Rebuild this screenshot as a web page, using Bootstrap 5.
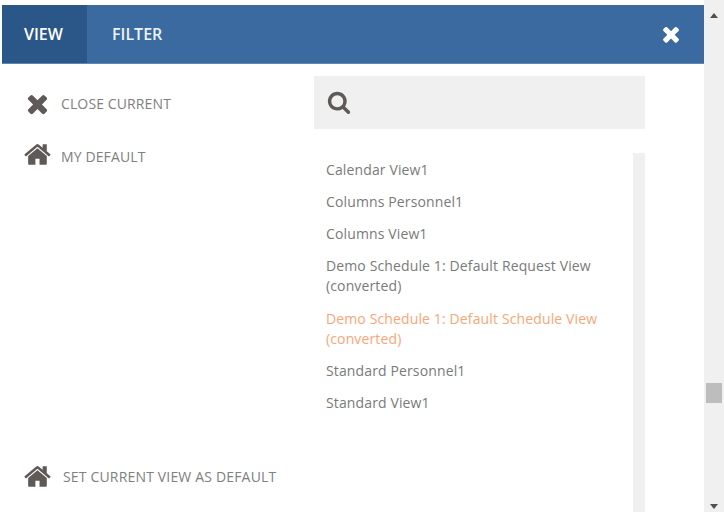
<!DOCTYPE html>
<html lang="en">
<head>
<meta charset="utf-8">
<title>View panel</title>
<link rel="stylesheet" href="https://cdn.jsdelivr.net/npm/bootstrap@5.3.0/dist/css/bootstrap.min.css">
<style>
html,body{height:512px;overflow:hidden;background:#fff}
body{font-family:"Open Sans","Noto Sans",sans-serif;font-size:14px;color:#7a7a7a}
.shell{height:512px}
.pane{width:704px;padding:5px 0 0 2px}
.topbar{height:59px;background:#3a6a9f;border-bottom:1px solid #5c86b3}
.tab-item{height:58px;color:#fff;font-size:16px;font-weight:600;text-decoration:none;display:flex;align-items:center}
.tab-on{width:85px;padding-left:22px;background:#2b5788}
.tab-off{padding-left:25px;color:#eef3f8}
.close-x{margin-right:21px}
.body-area{height:448px}
.side{width:312px;padding:25px 0 0 21px}
.act{color:#808080;line-height:20px;letter-spacing:.12px;text-transform:uppercase}
.act svg{fill:#5f5a57;flex:none}
.act-close{gap:9px;height:29px}
.act-home{margin-top:22px;margin-left:1px;gap:8px;height:29px}
.act-home span{padding-top:7px}
.act-set{margin-top:auto;margin-bottom:21px;margin-left:1px;gap:10px;height:29px;letter-spacing:.17px}
.act-set span{padding-top:1px}
.finder{width:331px;height:53px;margin-top:12px;background:#f0f0f0;padding:0 0 2px 13px}
.finder svg{fill:#5f5a57}
.listwrap{width:331px;margin-top:24px;height:359px}
.view-list{width:319px;padding:.5px 12px 0;margin:0;list-style:none}
.view-list li{padding:6px 0;line-height:20.2px;color:#7a7a7a;letter-spacing:.13px}
.view-list li.chosen{color:#f8a678}
.list-track{width:12px;background:#f0f0f0}
.sbar{width:20px;background:#f0f0f0}
.sbar-up{width:0;height:0;border-left:4px solid transparent;border-right:4px solid transparent;border-bottom:5px solid #505050;margin-top:13px}
.sbar-thumb{width:16px;height:20px;background:#bdbdbd;margin-top:365px}
.sbar-down{width:0;height:0;border-left:4px solid transparent;border-right:4px solid transparent;border-top:5px solid #505050;margin-top:auto;margin-bottom:3px}
</style>
</head>
<body>
<div class="shell d-flex">
  <div class="pane">
    <div class="topbar d-flex align-items-start">
      <a href="#" class="tab-item tab-on">VIEW</a>
      <a href="#" class="tab-item tab-off">FILTER</a>
      <a href="#" class="tab-item close-x ms-auto" aria-label="Close">
        <svg width="24" height="24" viewBox="0 0 1792 1792"><path fill="#fff" d="M1490 1322q0 40-28 68l-136 136q-28 28-68 28t-68-28l-294-294-294 294q-28 28-68 28t-68-28l-136-136q-28-28-28-68t28-68l294-294-294-294q-28-28-28-68t28-68l136-136q28-28 68-28t68 28l294 294 294-294q28-28 68-28t68 28l136 136q28 28 28 68t-28 68l-294 294 294 294q28 28 28 68z"/></svg>
      </a>
    </div>
    <div class="body-area d-flex">
      <div class="side d-flex flex-column">
        <div class="act act-close d-flex align-items-center">
          <svg width="29" height="29" viewBox="0 0 1792 1792"><path d="M1490 1322q0 40-28 68l-136 136q-28 28-68 28t-68-28l-294-294-294 294q-28 28-68 28t-68-28l-136-136q-28-28-28-68t28-68l294-294-294-294q-28-28-28-68t28-68l136-136q28-28 68-28t68 28l294 294 294-294q28-28 68-28t68 28l136 136q28 28 28 68t-28 68l-294 294 294 294q28 28 28 68z"/></svg>
          <span>Close Current</span>
        </div>
        <div class="act act-home d-flex align-items-start">
          <svg width="29" height="29" viewBox="0 0 1792 1792"><path d="M1408 992v480q0 26-19 45t-45 19h-384v-384h-256v384h-384q-26 0-45-19t-19-45v-480q0-1 .5-3t.5-3l575-474 575 474q1 2 1 6zm223-69l-62 74q-8 9-21 11h-3q-13 0-21-7l-692-577-692 577q-12 8-24 7-13-2-21-11l-62-74q-8-10-7-23.500t11-21.500l719-599q32-26 76-26t76 26l244 204v-195q0-14 9-23t23-9h192q14 0 23 9t9 23v408l219 182q10 8 11 21.500t-7 23.500z"/></svg>
          <span>My Default</span>
        </div>
        <div class="act act-set d-flex align-items-center">
          <svg width="29" height="29" viewBox="0 0 1792 1792"><path d="M1408 992v480q0 26-19 45t-45 19h-384v-384h-256v384h-384q-26 0-45-19t-19-45v-480q0-1 .5-3t.5-3l575-474 575 474q1 2 1 6zm223-69l-62 74q-8 9-21 11h-3q-13 0-21-7l-692-577-692 577q-12 8-24 7-13-2-21-11l-62-74q-8-10-7-23.500t11-21.500l719-599q32-26 76-26t76 26l244 204v-195q0-14 9-23t23-9h192q14 0 23 9t9 23v408l219 182q10 8 11 21.500t-7 23.500z"/></svg>
          <span>Set Current View As Default</span>
        </div>
      </div>
      <div>
        <div class="finder d-flex align-items-center">
          <svg width="24" height="24" viewBox="0 0 1792 1792"><path d="M1216 832q0-185-131.500-316.500t-316.500-131.500-316.500 131.500-131.500 316.500 131.500 316.500 316.500 131.500 316.500-131.500 131.500-316.500zm512 832q0 52-38 90t-90 38q-54 0-90-38l-343-342q-179 124-399 124-143 0-273.500-55.500t-225-150-150-225-55.500-273.500 55.500-273.500 150-225 225-150 273.500-55.500 273.500 55.500 225 150 150 225 55.500 273.500q0 220-124 399l343 343q37 37 37 90z"/></svg>
        </div>
        <div class="listwrap d-flex">
          <ul class="view-list">
            <li>Calendar View1</li>
            <li>Columns Personnel1</li>
            <li>Columns View1</li>
            <li>Demo Schedule 1: Default Request View (converted)</li>
            <li class="chosen">Demo Schedule 1: Default Schedule View (converted)</li>
            <li>Standard Personnel1</li>
            <li>Standard View1</li>
          </ul>
          <div class="list-track"></div>
        </div>
      </div>
    </div>
  </div>
  <div class="sbar d-flex flex-column align-items-center">
    <div class="sbar-up"></div>
    <div class="sbar-thumb"></div>
    <div class="sbar-down"></div>
  </div>
</div>
<script src="https://cdn.jsdelivr.net/npm/bootstrap@5.3.0/dist/js/bootstrap.bundle.min.js"></script>
</body>
</html>
